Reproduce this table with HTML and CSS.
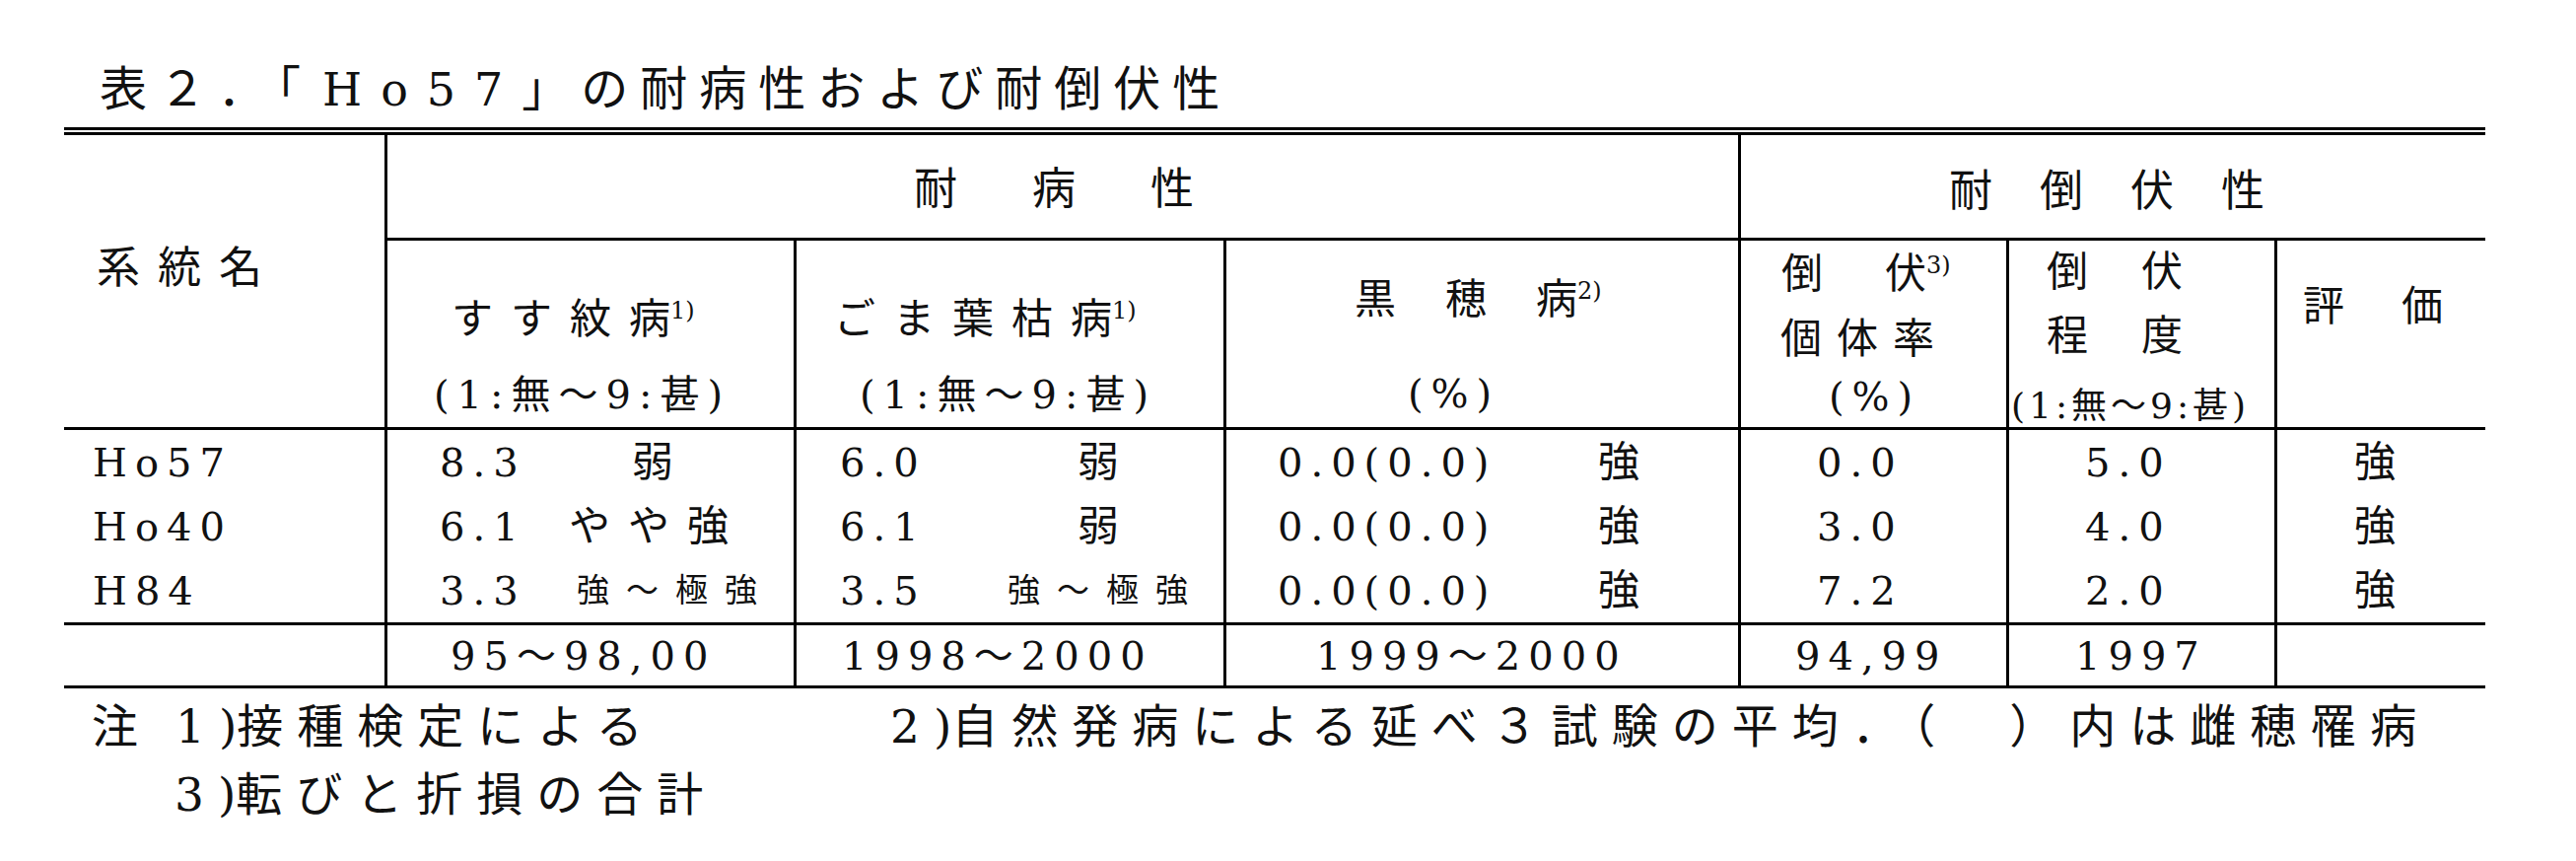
FILE: index.html
```html
<!DOCTYPE html>
<html lang="ja">
<head>
<meta charset="utf-8">
<title>表２．「Ho57」の耐病性および耐倒伏性</title>
<link rel="stylesheet" href="styles.css">
</head>
<body>
<div class="page">
  <h1 class="title">表２．「<span class="lat">Ho57</span>」の耐病性および耐倒伏性</h1>

  <div class="tbl">
    <div class="cell br bb name"><span class="sp18">系統</span>名</div>
    <div class="cell br bb grp dis"><span class="sp76">耐病</span>性</div>
    <div class="cell bb grp lod"><span class="sp48">耐倒伏</span>性</div>

    <div class="cell br bb hd sus">
      <div class="t1"><span class="sp18">すす紋</span>病<span class="sup">1)</span></div>
      <div class="t2">(1:無〜9:甚)</div>
    </div>
    <div class="cell br bb hd gom">
      <div class="t1"><span class="sp18">ごま葉枯</span>病<span class="sup">1)</span></div>
      <div class="t2">(1:無〜9:甚)</div>
    </div>
    <div class="cell br bb hd smu">
      <div class="t1"><span class="sp50">黒穂</span>病<span class="sup">2)</span></div>
      <div class="t2">(%)</div>
    </div>
    <div class="cell br bb hd rat">
      <div class="t1"><span class="sp63">倒</span>伏<span class="sup">3)</span></div>
      <div class="t2"><span class="sp15">個体</span>率</div>
      <div class="t3">(%)</div>
    </div>
    <div class="cell br bb hd deg">
      <div class="t1"><span class="sp54">倒</span>伏</div>
      <div class="t2"><span class="sp54">程</span>度</div>
      <div class="t3">(1:無〜9:甚)</div>
    </div>
    <div class="cell bb hd eva">
      <div class="t1"><span class="sp58">評</span>価</div>
    </div>

    <div class="cell br d c0">Ho57</div>
    <div class="cell br d c1"><span class="num">8.3</span><span class="jp weak">弱</span></div>
    <div class="cell br d c2"><span class="num">6.0</span><span class="jp weak">弱</span></div>
    <div class="cell br d c3"><span class="num">0.0(0.0)</span><span class="jp strong">強</span></div>
    <div class="cell br d c4">0.0</div>
    <div class="cell br d c5">5.0</div>
    <div class="cell d c6"><span class="jp">強</span></div>

    <div class="cell br d c0">Ho40</div>
    <div class="cell br d c1"><span class="num">6.1</span><span class="jp mid">やや強</span></div>
    <div class="cell br d c2"><span class="num">6.1</span><span class="jp weak">弱</span></div>
    <div class="cell br d c3"><span class="num">0.0(0.0)</span><span class="jp strong">強</span></div>
    <div class="cell br d c4">3.0</div>
    <div class="cell br d c5">4.0</div>
    <div class="cell d c6"><span class="jp">強</span></div>

    <div class="cell br bb d c0">H84</div>
    <div class="cell br bb d c1"><span class="num">3.3</span><span class="jp-s vs">強〜極強</span></div>
    <div class="cell br bb d c2"><span class="num">3.5</span><span class="jp-s vs">強〜極強</span></div>
    <div class="cell br bb d c3"><span class="num">0.0(0.0)</span><span class="jp strong">強</span></div>
    <div class="cell br bb d c4">7.2</div>
    <div class="cell br bb d c5">2.0</div>
    <div class="cell bb d c6"><span class="jp">強</span></div>

    <div class="cell br bb d"></div>
    <div class="cell br bb d y1">95〜98,00</div>
    <div class="cell br bb d y2">1998〜2000</div>
    <div class="cell br bb d y3">1999〜2000</div>
    <div class="cell br bb d y4">94,99</div>
    <div class="cell br bb d y5">1997</div>
    <div class="cell bb d"></div>
  </div>

  <div class="notes">
    <div class="nl1"><span class="nlab">注</span><span class="n1">1<span class="np">)</span>接種検定による</span>2<span class="np">)</span>自然発病による延べ３試験の平均．（　）内は雌穂罹病</div>
    <div class="nl2">3<span class="np">)</span>転びと折損の合計</div>
  </div>
</div>
</body>
</html>
```

FILE: styles.css
```css
* {
  box-sizing: border-box;
  margin: 0;
  padding: 0;
}

html,
body {
  background: #fff;
}

body {
  width: 2613px;
  height: 873px;
  overflow: hidden;
  color: #111;
  font-family: "DejaVu Serif", "Liberation Serif", "Noto Sans CJK JP", serif;
  font-weight: 400;
}

/* ---------- title ---------- */
.title {
  margin: 66px 0 0 101px;
  font-size: 48px;
  line-height: 48px;
  font-weight: 400;
  letter-spacing: 12px;
  white-space: nowrap;
}

.title .lat {
  margin-left: 10px;
  font-size: 46px;
  letter-spacing: 19px;
}

/* ---------- table grid ---------- */
.tbl {
  margin: 14px 0 0 65px;
  width: 2456px;
  border-top: 8px double #000;
  display: grid;
  grid-template-columns: 328px 415px 436px 522px 272px 272px 211px;
  grid-template-rows: 107px 192px 65px 65px 68px 64px;
}

.cell {
  border: 0 solid #000;
  white-space: nowrap;
}

.br {
  border-right-width: 3px;
}

.bb {
  border-bottom-width: 3px;
}

/* letter-spacing helpers: applied to all but the last character */
.sp15 { letter-spacing: 15px; }
.sp18 { letter-spacing: 18px; }
.sp48 { letter-spacing: 48px; }
.sp50 { letter-spacing: 50px; }
.sp54 { letter-spacing: 54px; }
.sp58 { letter-spacing: 58px; }
.sp63 { letter-spacing: 63px; }
.sp76 { letter-spacing: 76px; }

/* header row 1 */
.name {
  grid-column: 1;
  grid-row: 1 / 3;
  padding: 113px 0 0 33px;
  font-size: 44px;
  line-height: 44px;
}

.grp {
  font-size: 44px;
  line-height: 44px;
}

.dis {
  grid-column: 2 / 5;
  grid-row: 1;
  padding: 33px 0 0 534px;
}

.lod {
  grid-column: 5 / 8;
  grid-row: 1;
  padding: 35px 0 0 211px;
}

/* header row 2 */
.hd {
  font-size: 42px;
  line-height: 42px;
}

.hd .t1,
.hd .t2,
.hd .t3 {
  display: block;
}

.sup {
  font-size: 24px;
  line-height: 24px;
  vertical-align: top;
  letter-spacing: 0;
}

.sus { padding-top: 59px; }
.sus .t1 { margin-left: 65px; }
.sus .t2 { margin: 34px 0 0 47px; font-size: 40px; letter-spacing: 8px; }

.gom { padding-top: 59px; }
.gom .t1 { margin-left: 38px; }
.gom .t2 { margin: 34px 0 0 64px; font-size: 40px; letter-spacing: 8px; }

.smu { padding-top: 39px; }
.smu .t1 { margin-left: 130px; }
.smu .t2 { margin: 53px 0 0 184px; font-size: 40px; letter-spacing: 8px; }

.rat { padding-top: 13px; }
.rat .t1 { margin-left: 41px; }
.rat .t2 { margin: 24px 0 0 40px; }
.rat .t3 { margin: 16px 0 0 89px; font-size: 40px; letter-spacing: 8px; }

.deg { padding-top: 11px; }
.deg .t1 { margin-left: 38px; }
.deg .t2 { margin: 23px 0 0 38px; }
.deg .t3 { margin: 32px 0 0 2px; font-size: 36px; line-height: 36px; letter-spacing: 4px; }

.eva { padding-top: 46px; }
.eva .t1 { margin-left: 26px; }

/* data rows */
.d {
  display: flex;
  align-items: center;
  font-size: 40px;
  line-height: 40px;
  letter-spacing: 8px;
}

.d .jp {
  font-size: 42px;
  letter-spacing: 18px;
}

.d .jp-s {
  font-size: 33px;
  letter-spacing: 17px;
}

.c0 { padding-left: 29px; }

.c1 { padding-left: 53px; }
.c1 .num { width: 100px; }
.c1 .weak { margin-left: 95px; }
.c1 .mid { margin-left: 31px; }
.c1 .vs { margin-left: 39px; }

.c2 { padding-left: 44px; }
.c2 .num { width: 100px; }
.c2 .weak { margin-left: 141px; }
.c2 .vs { margin-left: 70px; }

.c3 { padding-left: 52px; }
.c3 .num { width: 240px; }
.c3 .strong { margin-left: 85px; }

.c4 { padding-left: 77px; }
.c5 { padding-left: 77px; }
.c6 { padding-left: 78px; }

.y1 { padding-left: 64px; }
.y2 { padding-left: 46px; }
.y3 { padding-left: 91px; }
.y4 { padding-left: 55px; }
.y5 { padding-left: 67px; }

/* notes */
.notes {
  margin-top: 4px;
  padding-left: 93px;
  font-size: 47px;
  line-height: 69px;
  letter-spacing: 14px;
  white-space: nowrap;
}

.nlab {
  display: inline-block;
  width: 85px;
}

.n1 {
  display: inline-block;
  width: 725px;
}

.np {
  letter-spacing: 0;
}

.nl2 {
  padding-left: 84px;
}
```
